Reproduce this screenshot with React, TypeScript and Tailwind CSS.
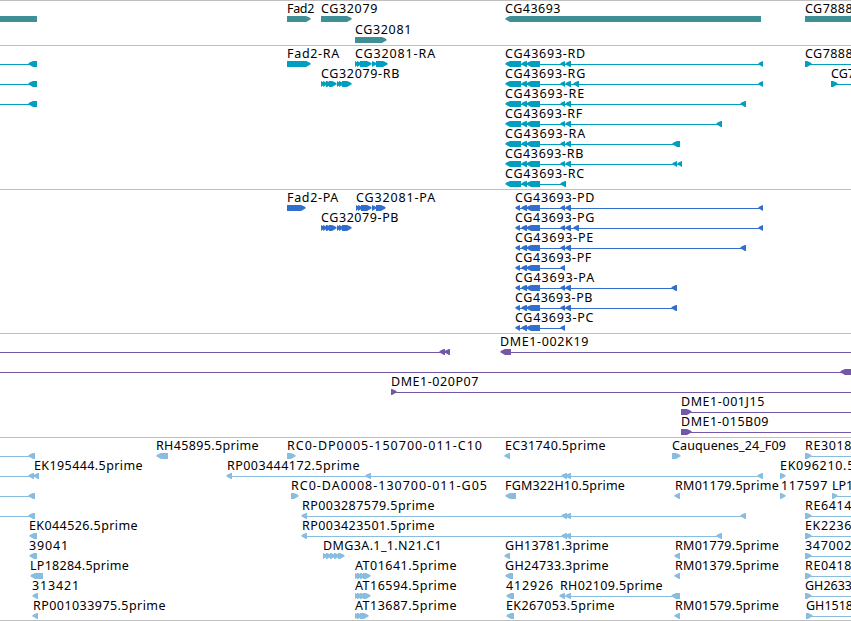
import { clsx } from "clsx";

type Span = [number, number];

interface Feature {
  dir: "left" | "right";
  exons: Span[];
  line?: Span;
  label?: string;
  labelX?: number;
  labelEnd?: number;
}

interface Track {
  id: string;
  color: string;
  rowClass: string;
  padClass: string;
  rows: Feature[][];
}

const VIEW_WIDTH = 851;
const FONT = '12.5px "Noto Sans"';

const left = (label: string | undefined, labelX: number, labelEnd: number, exons: Span[], line?: Span): Feature => ({
  dir: "left", label, labelX, labelEnd, exons, line,
});

const right = (label: string | undefined, labelX: number, labelEnd: number, exons: Span[], line?: Span): Feature => ({
  dir: "right", label, labelX, labelEnd, exons, line,
});

const rest = (exons: Span[], line?: Span): Feature => ({ dir: "left", exons, line });

const mrna: Span[] = [[505, 521], [521, 527], [526, 540], [560, 565]];
const cds: Span[] = [[515, 520], [521, 527], [526, 540], [560, 565]];
const mid: Span = [565, 571];

const tracks: Track[] = [
  {
    id: "genes",
    color: "#3f8f96",
    rowClass: "h-[21px]",
    padClass: "pb-0.5",
    rows: [
      [
        rest([[-20, 37]]),
        right("Fad2", 287, 314, [[287, 311]]),
        right("CG32079", 321, 378, [[321, 352]]),
        left("CG43693", 505, 561, [[505, 761]]),
        right("CG7888", 805, 853, [[805, 880]]),
      ],
      [right("CG32081", 355, 412, [[355, 387]])],
    ],
  },
  {
    id: "transcripts",
    color: "#009fbf",
    rowClass: "h-5",
    padClass: "pb-[3px]",
    rows: [
      [
        rest([[28, 37]], [0, 30]),
        right("Fad2-RA", 287, 340, [[287, 311]]),
        right("CG32081-RA", 355, 436, [[355, 359], [357, 362], [360, 372], [372, 377], [376, 388]]),
        left("CG43693-RD", 505, 586, [...mrna, mid, [758, 763]], [510, 760]),
        right("CG7888", 805, 853, [[805, 812]], [806, 851]),
      ],
      [
        rest([[28, 37]], [0, 30]),
        right("CG32079-RB", 321, 400, [[321, 325], [323, 328], [326, 332], [329, 337], [337, 341], [339, 344], [342, 352]]),
        left("CG43693-RG", 505, 586, [...mrna, mid, [573, 579], [758, 763]], [510, 760]),
        right("CG7", 831, 855, [[831, 838]], [832, 851]),
      ],
      [rest([[28, 37]], [0, 30]), left("CG43693-RE", 505, 585, [...mrna, mid, [740, 746]], [510, 743])],
      [left("CG43693-RF", 505, 583, [...mrna, mid, [716, 722]], [510, 720])],
      [left("CG43693-RA", 505, 586, [...mrna, mid, [672, 680]], [510, 678])],
      [left("CG43693-RB", 505, 584, [...mrna, mid, [672, 677], [677, 682]], [510, 680])],
      [left("CG43693-RC", 505, 585, [[505, 521], [521, 527], [526, 540], [560, 566]], [510, 563])],
    ],
  },
  {
    id: "proteins",
    color: "#326ecd",
    rowClass: "h-5",
    padClass: "pb-[3px]",
    rows: [
      [
        right("Fad2-PA", 287, 339, [[287, 306]]),
        right("CG32081-PA", 356, 436, [[356, 360], [358, 363], [361, 372], [372, 377], [376, 386]]),
        left("CG43693-PD", 515, 595, [...cds, mid, [758, 763]], [518, 760]),
      ],
      [
        right("CG32079-PB", 321, 399, [[321, 325], [323, 328], [326, 332], [329, 337], [337, 341], [339, 344], [342, 352]]),
        left("CG43693-PG", 515, 595, [...cds, mid, [573, 579], [758, 763]], [518, 760]),
      ],
      [left("CG43693-PE", 515, 594, [...cds, mid, [740, 746]], [518, 743])],
      [left("CG43693-PF", 515, 592, cds, [518, 563])],
      [left("CG43693-PA", 515, 595, [...cds, mid, [671, 677]], [518, 675])],
      [left("CG43693-PB", 515, 593, [...cds, mid, [671, 677]], [518, 675])],
      [left("CG43693-PC", 515, 594, cds, [518, 563])],
    ],
  },
  {
    id: "bacs",
    color: "#7557a8",
    rowClass: "h-5",
    padClass: "pb-[3px]",
    rows: [
      [rest([[439, 445], [444, 450]], [0, 447]), left("DME1-002K19", 500, 589, [[500, 511]], [505, 851])],
      [rest([[840, 870]], [0, 845])],
      [right("DME1-020P07", 391, 479, [[391, 397]], [393, 851])],
      [right("DME1-001J15", 681, 765, [[681, 692]], [685, 851])],
      [right("DME1-015B09", 681, 769, [[681, 692]], [685, 851])],
    ],
  },
  {
    id: "ests",
    color: "#89bddf",
    rowClass: "h-5",
    padClass: "pb-0.5",
    rows: [
      [
        rest([[28, 35]], [0, 31]),
        left("RH45895.5prime", 156, 259, [[156, 168]]),
        right("RC0-DP0005-150700-011-C10", 287, 483, [[287, 296]]),
        left("EC31740.5prime", 505, 606, [[504, 510]]),
        right("Cauquenes_24_F09", 672, 786, [[672, 681]]),
        right("RE3018", 805, 852, [[805, 812]], [806, 851]),
      ],
      [
        left("EK195444.5prime", 34, 143, [[28, 34], [33, 39]], [0, 36]),
        left("RP003444172.5prime", 227, 360, [[226, 232], [365, 371], [561, 567], [565, 571], [757, 763]], [229, 761]),
        right("EK096210.5", 780, 855, [[780, 786]]),
      ],
      [
        rest([[28, 35]], [0, 31]),
        right("RC0-DA0008-130700-011-G05", 291, 488, [[291, 299]]),
        left("FGM322H10.5prime", 505, 625, [[505, 516]]),
        left("RM01179.5prime", 675, 779, [[674, 680]]),
        right("117597", 781, 828, [[780, 786]]),
        right("LP1", 832, 853, [[832, 838]], [833, 851]),
      ],
      [
        rest([[28, 35]], [0, 31]),
        left("RP003287579.5prime", 302, 435, [[301, 307], [561, 567], [565, 571], [740, 746]], [304, 744]),
        right("RE6414", 805, 852, [[805, 812]], [806, 851]),
      ],
      [
        left("EK044526.5prime", 29, 138, [[29, 37]]),
        left("RP003423501.5prime", 302, 435, [[301, 307], [561, 567], [565, 571], [716, 722]], [304, 720]),
        right("EK2236", 805, 852, [[805, 812]], [806, 851]),
      ],
      [
        left("39041", 29, 69, [[29, 37]]),
        right("DMG3A.1_1.N21.C1", 323, 442, [[323, 328], [326, 332], [330, 336], [334, 340], [338, 345]]),
        left("GH13781.3prime", 505, 609, [[504, 510]]),
        left("RM01779.5prime", 675, 779, [[674, 680]]),
        right("347002", 805, 852, [[805, 812]], [806, 851]),
      ],
      [
        left("LP18284.5prime", 30, 129, [[30, 43]]),
        right("AT01641.5prime", 355, 457, [[355, 360], [357, 363], [360, 366], [363, 371]]),
        left("GH24733.3prime", 505, 609, [[505, 513]]),
        left("RM01379.5prime", 675, 779, [[674, 680]]),
        right("RE0418", 805, 852, [[805, 812]], [806, 851]),
      ],
      [
        left("313421", 32, 80, [[32, 38]]),
        right("AT16594.5prime", 355, 457, [[355, 360], [357, 363], [360, 366], [363, 371]]),
        left("412926", 506, 554, [[506, 514]]),
        left("RH02109.5prime", 560, 663, [[559, 565], [565, 571], [671, 680]], [562, 678]),
        right("GH2633", 805, 852, [[805, 812]], [806, 851]),
      ],
      [
        left("RP001033975.5prime", 33, 166, [[32, 38]]),
        right("AT13687.5prime", 355, 457, [[355, 360], [357, 363], [360, 369]]),
        left("EK267053.5prime", 506, 615, [[506, 514]]),
        left("RM01579.5prime", 675, 779, [[674, 680]]),
        right("GH1518", 806, 853, [[806, 813]], [807, 851]),
      ],
    ],
  },
];

const ctx = document.createElement("canvas").getContext("2d");

// spreads the letters so that a label fills its slot
function tracking(label: string, width: number) {
  if (!ctx) return 0;
  ctx.font = FONT;
  return (width - ctx.measureText(label).width) / label.length;
}

function exonPoints([a, b]: Span, dir: Feature["dir"]) {
  const tip = Math.min(5, b - a);
  return dir === "left"
    ? `${a},3 ${a + 1.5},1.5 ${a + tip},0 ${b},0 ${b},6 ${a + tip},6 ${a + 1.5},4`
    : `${a},0 ${b - tip},0 ${b - 1.5},1.5 ${b},3 ${b - 1.5},4 ${b - tip},6 ${a},6`;
}

function Glyph({ feature, color }: { feature: Feature; color: string }) {
  return (
    <g fill={color}>
      {feature.line && (
        <rect x={feature.line[0]} y={3} width={feature.line[1] - feature.line[0]} height={1} shapeRendering="crispEdges" />
      )}
      {feature.exons.map((e, i) => (
        <polygon key={i} points={exonPoints(e, feature.dir)} />
      ))}
    </g>
  );
}

function Row({ features, track }: { features: Feature[]; track: Track }) {
  return (
    <div className={clsx("relative", track.rowClass)}>
      <svg className="absolute left-0 top-[15px]" width={VIEW_WIDTH} height={6}>
        {features.map((f, i) => (
          <Glyph key={i} feature={f} color={track.color} />
        ))}
      </svg>
      {features.map((f, i) =>
        f.label ? (
          <span
            key={i}
            className="absolute top-0 text-[12.5px] leading-[16px] whitespace-pre text-black"
            style={{ left: f.labelX, letterSpacing: tracking(f.label, (f.labelEnd ?? 0) - (f.labelX ?? 0)) }}
          >
            {f.label}
          </span>
        ) : null
      )}
    </div>
  );
}

export default function App() {
  return (
    <div className="w-[851px] h-[621px] overflow-hidden bg-white font-['Noto_Sans',sans-serif]">
      {tracks.map((track) => (
        <section key={track.id} className={clsx("border-t border-[#bfbfbf]", track.padClass)}>
          {track.rows.map((features, i) => (
            <Row key={i} features={features} track={track} />
          ))}
        </section>
      ))}
      <div className="h-px bg-[#bfbfbf]" />
    </div>
  );
}
